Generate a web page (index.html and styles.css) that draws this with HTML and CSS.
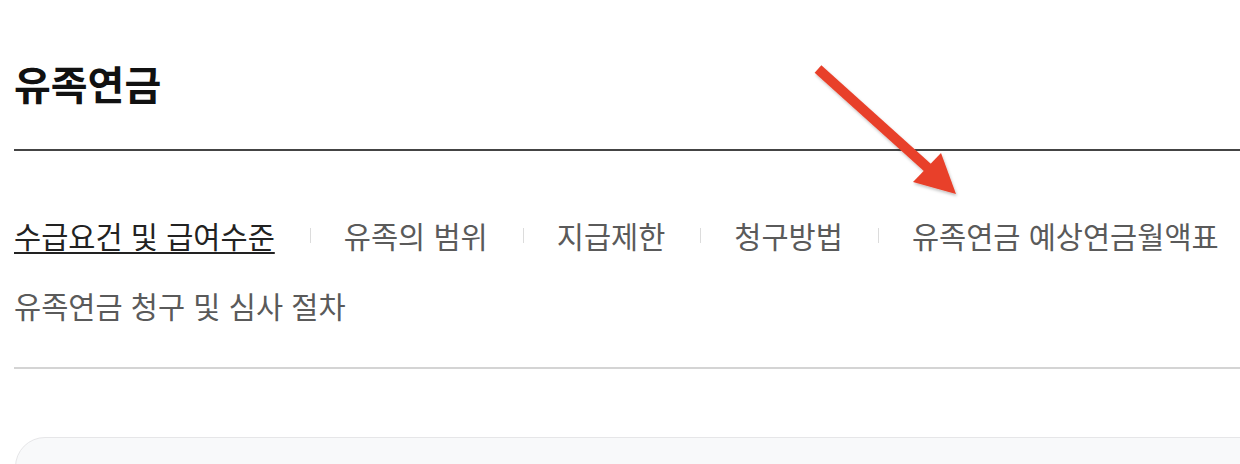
FILE: index.html
```html
<!DOCTYPE html>
<html lang="ko">
<head>
<meta charset="utf-8">
<title>유족연금</title>
<link rel="stylesheet" href="styles.css">
</head>
<body>
<div class="page">
  <h1 class="title">유족연금</h1>
  <nav class="tabs">
    <ul class="tab-list">
      <li class="tab active sep">수급요건 및 급여수준</li>
      <li class="tab sep">유족의 범위</li>
      <li class="tab sep">지급제한</li>
      <li class="tab sep">청구방법</li>
      <li class="tab">유족연금 예상연금월액표</li>
      <li class="tab">유족연금 청구 및 심사 절차</li>
    </ul>
  </nav>
  <div class="card"></div>
  <svg class="arrow" width="200" height="170" viewBox="0 0 200 170" aria-hidden="true">
    <defs>
      <filter id="sh" x="-20%" y="-20%" width="140%" height="140%">
        <feDropShadow dx="1" dy="2" stdDeviation="1.5" flood-color="#000" flood-opacity="0.25"/>
      </filter>
    </defs>
    <g filter="url(#sh)">
      <line x1="14" y1="11" x2="124" y2="110" stroke="#e8412a" stroke-width="10"/>
      <polygon points="137,95 109,124 152,136" fill="#e8412a"/>
    </g>
  </svg>
</div>
</body>
</html>
```

FILE: styles.css
```css
html, body {
  margin: 0;
  padding: 0;
  background: #fff;
  overflow: hidden;
}
body {
  width: 1240px;
  height: 464px;
  font-family: "Noto Sans CJK KR", "Noto Sans", sans-serif;
}
.page {
  position: relative;
  width: 1280px;
  padding: 63px 0 0 14px;
}
.title {
  margin: 0;
  font-size: 40px;
  line-height: 1;
  font-weight: 700;
  color: #111;
  padding-bottom: 46px;
  border-bottom: 2px solid #444;
}
.tabs {
  padding: 70px 0 47px;
  border-bottom: 2px solid #d4d4d4;
}
.tab-list {
  list-style: none;
  margin: 0;
  padding: 0;
  display: flex;
  flex-wrap: wrap;
  row-gap: 40px;
  width: 1226px;
}
.tab {
  display: flex;
  align-items: center;
  font-size: 29.5px;
  line-height: 1;
  color: #5a5a5a;
  white-space: nowrap;
}
.tab.sep::after {
  content: "";
  display: block;
  width: 1px;
  height: 15px;
  background: #dcdcdc;
  margin: 0 33px 0 35px;
}
.tab.active {
  color: #222;
  text-decoration: underline;
  text-decoration-thickness: 2px;
  text-underline-offset: 4px;
}
.card {
  margin-top: 68px;
  height: 80px;
  background: #f8f9fa;
  border: 1px solid #e6e6e8;
  border-radius: 30px;
  margin-left: 1px;
}
.arrow {
  position: absolute;
  left: 804px;
  top: 58px;
}
```
